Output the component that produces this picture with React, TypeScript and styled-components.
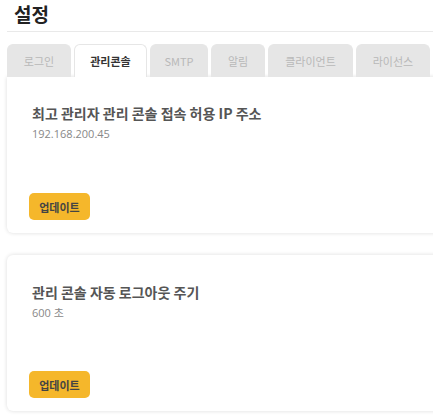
import React, { useState } from 'react';
import styled, { createGlobalStyle } from 'styled-components';

const tabs = ['로그인', '관리콘솔', 'SMTP', '알림', '클라이언트', '라이선스'];
const tabWidths = [64, 73, 58, 54, 85, 74];

const settings = [
  { id: 1, title: '최고 관리자 관리 콘솔 접속 허용 IP 주소', value: '192.168.200.45' },
  { id: 2, title: '관리 콘솔 자동 로그아웃 주기', value: '600 초' }
];

const GlobalStyle = createGlobalStyle`
  html, body {
    margin: 0;
    padding: 0;
    background: #fff;
  }
  body {
    font-family: 'Noto Sans CJK KR', 'Noto Sans', sans-serif;
  }
`;

const Viewport = styled.div`
  width: 100%;
  overflow: hidden;
`;

const Page = styled.div`
  width: 470px;
  padding: 0 0 4px 7px;
`;

const Title = styled.h1`
  margin: 0;
  padding: 1px 0 0 7px;
  height: 30px;
  font-size: 19px;
  line-height: 26px;
  font-weight: 700;
  color: #222;
  border-bottom: 1px solid #e9e9e9;
`;

const TabBar = styled.div`
  display: flex;
  gap: 3px;
  margin-top: 12px;
  height: 33px;
`;

const Tab = styled.button<{ $active: boolean }>`
  flex: none;
  height: 33px;
  border: 1px solid #e6e6e6;
  border-bottom: none;
  border-radius: 6px 6px 0 0;
  background: ${p => (p.$active ? '#fff' : '#e6e6e6')};
  color: ${p => (p.$active ? '#333' : '#b8b8b8')};
  font-family: 'Noto Sans CJK KR', sans-serif;
  font-size: 11px;
  font-weight: ${p => (p.$active ? 700 : 400)};
  padding: 0;
  cursor: pointer;
  position: relative;
  z-index: ${p => (p.$active ? 2 : 1)};
`;

const Cards = styled.div`
  display: flex;
  flex-direction: column;
  gap: 22px;
`;

const Card = styled.section`
  display: flex;
  flex-direction: column;
  min-height: 156px;
  box-sizing: border-box;
  padding: 26px 22px 13px 22px;
  background: #fff;
  border-radius: 0 0 6px 6px;
  box-shadow: 0 0 4px rgba(0, 0, 0, 0.14);

  &:not(:first-child) {
    border-radius: 6px;
    padding-top: 27px;
  }
`;

const CardTitle = styled.h2`
  margin: 0 0 0 3px;
  font-size: 14px;
  line-height: 20px;
  font-weight: 700;
  color: #555;
`;

const CardValue = styled.p`
  margin: 3px 0 0 3px;
  font-family: 'Open Sans', 'Noto Sans CJK KR', sans-serif;
  font-size: 11px;
  line-height: 16px;
  color: #888;
`;

const UpdateButton = styled.button`
  margin-top: auto;
  align-self: flex-start;
  width: 61px;
  height: 27px;
  border: none;
  border-radius: 5px;
  background: #f5b72b;
  color: #444;
  font-family: 'Noto Sans CJK KR', sans-serif;
  font-size: 11px;
  font-weight: 700;
  cursor: pointer;
`;

const App: React.FC = () => {
  const [active, setActive] = useState(1);

  return (
    <Viewport>
      <GlobalStyle />
      <Page>
        <Title>설정</Title>
        <TabBar>
          {tabs.map((t, i) => (
            <Tab key={t} $active={i === active} style={{ width: tabWidths[i] }} onClick={() => setActive(i)}>
              {t}
            </Tab>
          ))}
        </TabBar>
        <Cards>
          {settings.map(s => (
            <Card key={s.id}>
              <CardTitle>{s.title}</CardTitle>
              <CardValue>{s.value}</CardValue>
              <UpdateButton>업데이트</UpdateButton>
            </Card>
          ))}
        </Cards>
      </Page>
    </Viewport>
  );
};

export default App;
